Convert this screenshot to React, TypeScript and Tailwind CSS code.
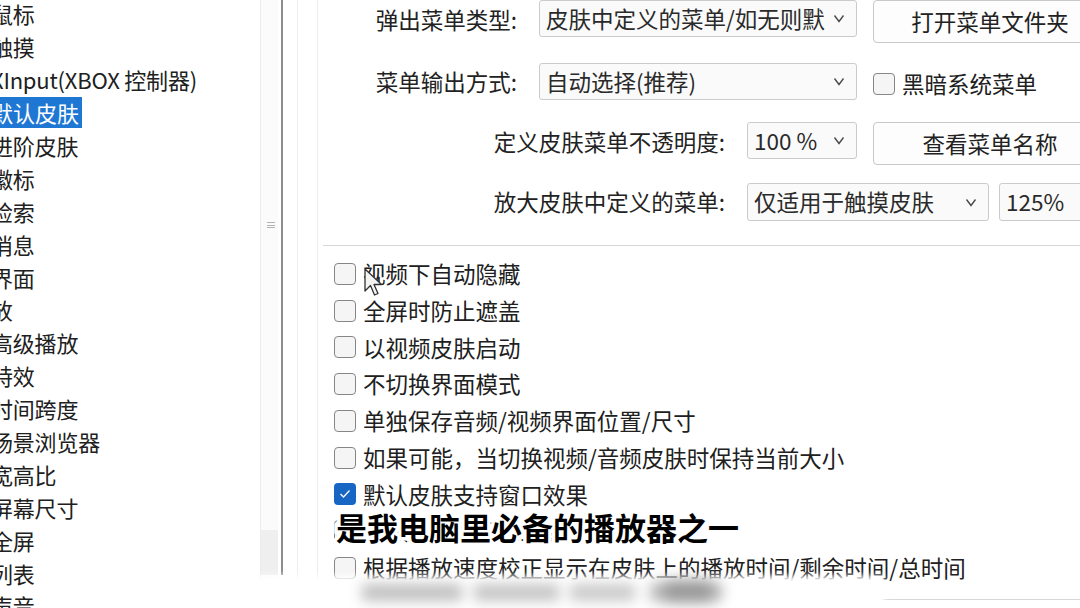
import React from 'react';

const treeItems: { label: string; offset: number; selected?: boolean }[] = [
  { label: '鼠标', offset: -9 },
  { label: '触摸', offset: -9 },
  { label: 'XInput(XBOX 控制器)', offset: -9 },
  { label: '默认皮肤', offset: -9, selected: true },
  { label: '进阶皮肤', offset: -9 },
  { label: '徽标', offset: -9 },
  { label: '检索', offset: -9 },
  { label: '消息', offset: -9 },
  { label: '界面', offset: -9 },
  { label: '播放', offset: -31 },
  { label: '高级播放', offset: -9 },
  { label: '特效', offset: -9 },
  { label: '时间跨度', offset: -9 },
  { label: '场景浏览器', offset: -9 },
  { label: '宽高比', offset: -9 },
  { label: '屏幕尺寸', offset: -9 },
  { label: '全屏', offset: -9 },
  { label: '列表', offset: -9 },
  { label: '声音', offset: -9 },
];

const options: { label: string; checked?: boolean }[] = [
  { label: '视频下自动隐藏' },
  { label: '全屏时防止遮盖' },
  { label: '以视频皮肤启动' },
  { label: '不切换界面模式' },
  { label: '单独保存音频/视频界面位置/尺寸' },
  { label: '如果可能，当切换视频/音频皮肤时保持当前大小' },
  { label: '默认皮肤支持窗口效果', checked: true },
  { label: '视频皮肤使用系统窗口标题栏' },
  { label: '根据播放速度校正显示在皮肤上的播放时间/剩余时间/总时间' },
];

const Chevron = () => (
  <svg width="12" height="9" viewBox="0 0 12 9" fill="none">
    <polyline points="1.5,1.5 6,7.5 10.5,1.5" stroke="#4a4a4a" strokeWidth="1.4" />
  </svg>
);

const Select = ({ text, className }: { text: string; className: string }) => (
  <div
    className={`flex shrink-0 items-center justify-between gap-2 rounded-[3px] border border-[#cbcbcb] bg-[#fafafa] pl-[6px] pr-[11px] text-[22.5px] text-[#2a2a2a] ${className}`}
  >
    <span className="overflow-hidden whitespace-nowrap">{text}</span>
    <span className="shrink-0">
      <Chevron />
    </span>
  </div>
);

const Button = ({ text, className }: { text: string; className: string }) => (
  <div
    className={`flex shrink-0 items-center justify-center rounded-[4px] border border-[#c9c9c9] bg-[#fdfdfd] text-[22.5px] text-[#222] ${className}`}
  >
    {text}
  </div>
);

const CheckBox = ({ checked }: { checked?: boolean }) =>
  checked ? (
    <div className="flex h-[22px] w-[22px] shrink-0 items-center justify-center rounded-[4px] bg-[#1766c4]">
      <svg width="12" height="10" viewBox="0 0 12 10" fill="none">
        <polyline points="1.5,5 4.5,8 10.5,1.5" stroke="white" strokeWidth="1.3" />
      </svg>
    </div>
  ) : (
    <div className="h-[22px] w-[22px] shrink-0 rounded-[4px] border border-[#868686] bg-[#f5f5f5]" />
  );

export default function App() {
  return (
    <div className="relative flex h-[608px] w-[1080px] overflow-hidden bg-white font-['Noto_Sans_CJK_SC',sans-serif] text-[#202020]">
      {/* tree */}
      <div className="flex w-[260px] shrink-0 flex-col overflow-hidden">
        <div className="-mt-[2.5px] flex flex-col">
          {treeItems.map((item) => (
            <div
              key={item.label}
              className="flex h-[32.9px] shrink-0 items-center whitespace-nowrap text-[22px]"
              style={{ marginLeft: item.offset }}
            >
              {item.selected ? (
                <span className="bg-[#1f77d4] pr-[3px] leading-[31px] text-white">{item.label}</span>
              ) : (
                <span className="tracking-[-0.2px]">{item.label}</span>
              )}
            </div>
          ))}
        </div>
      </div>

      {/* scroll strip + splitter */}
      <div className="flex w-[18px] shrink-0 flex-col border-l border-[#ececec] bg-[#fbfbfb]">
        <div className="h-[222px] shrink-0" />
        <div className="ml-[6px] flex h-[6px] w-[8px] flex-col justify-between">
          <div className="h-px bg-[#b3b3b3]" />
          <div className="h-px bg-[#b3b3b3]" />
          <div className="h-px bg-[#b3b3b3]" />
        </div>
        <div className="h-[302px] shrink-0" />
        <div className="h-[45px] shrink-0 bg-[#efefef]" />
      </div>
      <div className="w-[3px] shrink-0" />
      <div className="h-[575px] w-[2px] shrink-0 bg-[#8d8d8d]" />
      <div className="w-[14px] shrink-0" />
      <div className="w-px shrink-0 bg-[#eeeeee]" />
      <div className="w-[19px] shrink-0" />

      {/* settings panel */}
      <div className="flex min-w-0 flex-1 flex-col border-l border-[#ececec]">
        <div className="flex h-[43px] shrink-0 items-start">
          <div className="flex h-[39px] w-[221px] shrink-0 items-center justify-end pr-[22px] text-[22.5px] text-[#222]">
            弹出菜单类型:
          </div>
          <Select text="皮肤中定义的菜单/如无则默" className="h-[37px] w-[318px]" />
          <Button text="打开菜单文件夹" className="ml-[16px] h-[43px] w-[234px]" />
        </div>

        <div className="mt-[20px] flex h-[37px] shrink-0 items-center">
          <div className="flex w-[221px] shrink-0 justify-end pr-[22px] text-[22.5px] text-[#222]">菜单输出方式:</div>
          <Select text="自动选择(推荐)" className="h-[37px] w-[318px]" />
          <div className="ml-[16px] mt-[4px] flex items-center gap-[7px]">
            <CheckBox />
            <span className="whitespace-nowrap text-[22.5px]">黑暗系统菜单</span>
          </div>
        </div>

        <div className="mt-[22px] flex h-[43px] shrink-0 items-start">
          <div className="flex h-[40px] w-[429px] shrink-0 items-center justify-end pr-[22px] text-[22.5px] text-[#222]">
            定义皮肤菜单不透明度:
          </div>
          <Select text="100 %" className="h-[37px] w-[110px]" />
          <Button text="查看菜单名称" className="ml-[16px] h-[43px] w-[234px]" />
        </div>

        <div className="mt-[18px] flex h-[38px] shrink-0 items-center">
          <div className="flex w-[429px] shrink-0 justify-end pr-[22px] text-[22.5px] text-[#222]">放大皮肤中定义的菜单:</div>
          <Select text="仅适用于触摸皮肤" className="h-[38px] w-[242px]" />
          <Select text="125%" className="ml-[10px] h-[38px] w-[110px]" />
        </div>

        <div className="ml-[5px] mt-[24px] h-px shrink-0 bg-[#d6d6d6]" />

        <div className="mt-[9.5px] flex flex-col pl-[16px]">
          {options.map((o) => (
            <div key={o.label} className="flex h-[36.75px] shrink-0 items-center gap-[7px] whitespace-nowrap text-[22.5px]">
              <CheckBox checked={o.checked} />
              <span>{o.label}</span>
            </div>
          ))}
        </div>

        <div className="ml-[564px] mt-[12.75px] h-px shrink-0 bg-[#d8d8d8]" />
      </div>

      {/* mouse pointer */}
      <svg className="absolute left-[364px] top-[268px]" width="20" height="30" viewBox="0 0 20 30">
        <path
          d="M1 1 L1 23 L6.5 17.5 L10.5 27 L14 25.5 L10 16.5 L17.5 16.5 Z"
          fill="#f4f4f4"
          stroke="#303030"
          strokeWidth="1.3"
          strokeLinejoin="round"
        />
      </svg>

      {/* subtitle */}
      <div className="absolute left-[336px] top-[511px] whitespace-nowrap text-[31px] font-bold leading-none text-black [-webkit-text-stroke:7px_white] [paint-order:stroke_fill]">
        是我电脑里必备的播放器之一
      </div>

      {/* blurred caption strip */}
      <div className="absolute left-[252px] top-[576px] h-[40px] w-[632px] bg-white blur-[3px]">
        <div className="absolute left-[110px] top-[8px] h-[17px] w-[100px] bg-[#9d9d9d] opacity-65 blur-[6px]" />
        <div className="absolute left-[222px] top-[8px] h-[17px] w-[85px] bg-[#9d9d9d] opacity-60 blur-[6px]" />
        <div className="absolute left-[318px] top-[8px] h-[17px] w-[65px] bg-[#9d9d9d] opacity-55 blur-[6px]" />
        <div className="absolute left-[398px] top-[7px] h-[18px] w-[72px] bg-[#959595] opacity-65 blur-[6px]" />
        <div className="absolute left-[412px] top-[5px] h-[20px] w-[48px] bg-[#808080] opacity-65 blur-[7px]" />
      </div>
    </div>
  );
}
